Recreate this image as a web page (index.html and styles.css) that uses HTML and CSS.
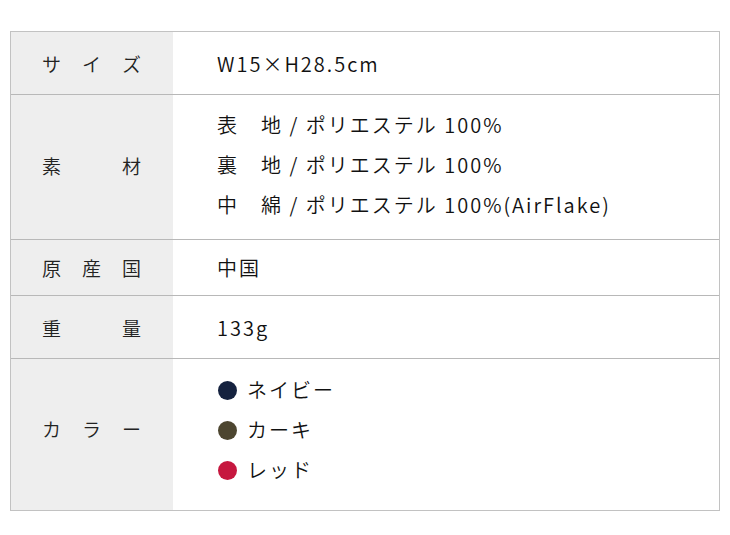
FILE: index.html
```html
<!DOCTYPE html>
<html lang="ja">
<head>
<meta charset="utf-8">
<link rel="stylesheet" href="styles.css">
</head>
<body>
<div class="spec">
  <div class="label r1"><span>サ</span><span>イ</span><span>ズ</span></div>
  <div class="value r1">W15×H28.5cm</div>

  <div class="label r2 multi"><span>素</span><span>材</span></div>
  <div class="value r2 multi">
    <div class="line">表　地 / ポリエステル 100%</div>
    <div class="line">裏　地 / ポリエステル 100%</div>
    <div class="line">中　綿 / ポリエステル 100%(AirFlake)</div>
  </div>

  <div class="label r3"><span>原</span><span>産</span><span>国</span></div>
  <div class="value r3">中国</div>

  <div class="label r4"><span>重</span><span>量</span></div>
  <div class="value r4">133g</div>

  <div class="label r5 last colors"><span>カ</span><span>ラ</span><span>ー</span></div>
  <div class="value r5 last colors">
    <div class="line color"><i class="dot navy"></i>ネイビー</div>
    <div class="line color"><i class="dot khaki"></i>カーキ</div>
    <div class="line color"><i class="dot red"></i>レッド</div>
  </div>
</div>
</body>
</html>
```
FILE: styles.css
```css
html, body {
  margin: 0;
  padding: 0;
  background: #fff;
}
body {
  padding: 31px 10px 0 10px;
  font-family: "Noto Sans CJK JP", "Noto Sans", sans-serif;
  color: #111;
}
.spec {
  width: 708px;
  display: grid;
  grid-template-columns: 162px 1fr;
  grid-template-rows: 63px 145px 56px 63px 151px;
  border: 1px solid #c2c2c2;
}
.label {
  background: #eeeeee;
  display: flex;
  justify-content: space-between;
  align-items: center;
  padding: 0 32px 0 31px;
  font-size: 19px;
  font-weight: 350;
  color: #222;
  border-bottom: 1px solid #b8b8b8;
}
.value {
  display: flex;
  flex-direction: column;
  justify-content: center;
  padding-left: 44px;
  font-size: 20px;
  font-weight: 350;
  letter-spacing: 2px;
  color: #111;
  border-bottom: 1px solid #b8b8b8;
}
.multi {
  padding-bottom: 4px;
}
.colors {
  padding-bottom: 9px;
}
.label.colors {
  padding-bottom: 12px;
}
.last {
  border-bottom: none;
}
.line {
  line-height: 40px;
}
.color {
  display: flex;
  align-items: center;
  letter-spacing: 2px;
}
.dot {
  display: inline-block;
  width: 19px;
  height: 19px;
  border-radius: 50%;
  margin: 0 10px 0 1px;
}
.navy { background: #15223f; }
.khaki { background: #4d4630; }
.red { background: #c6173f; }
```
